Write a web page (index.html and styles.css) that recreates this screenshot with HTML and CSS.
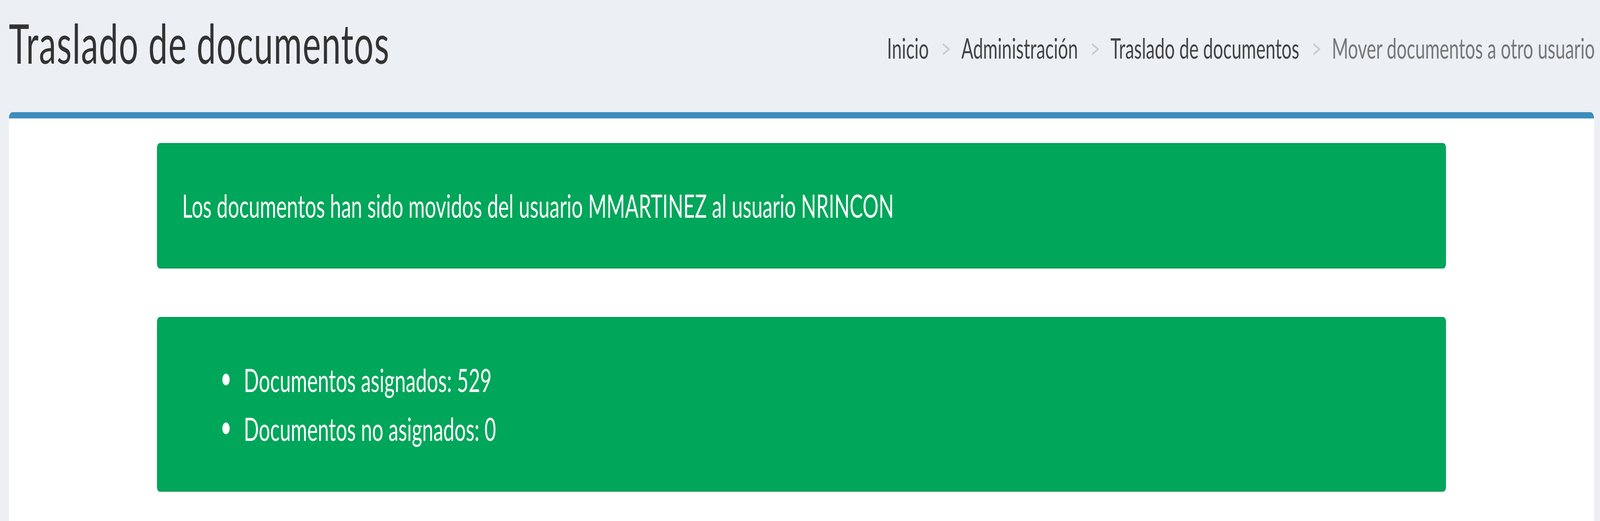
FILE: index.html
```html
<!DOCTYPE html>
<html lang="es">
<head>
    <meta charset="UTF-8">
    <meta name="viewport" content="width=device-width, initial-scale=1.0">
    <title>Traslado de documentos</title>
    <link rel="stylesheet" href="styles.css">
</head>
<body>
    <div class="frame">
        <div class="page">
            <section class="content-header">
                <h1>Traslado de documentos</h1>
                <ol class="breadcrumb">
                    <li><a href="#">Inicio</a></li>
                    <li><a href="#">Administración</a></li>
                    <li><a href="#">Traslado de documentos</a></li>
                    <li class="active">Mover documentos a otro usuario</li>
                </ol>
            </section>

            <section class="content">
                <div class="box">
                    <div class="alert">
                        Los documentos han sido movidos del usuario MMARTINEZ al usuario NRINCON
                    </div>
                    <div class="alert alert-list">
                        <ul>
                            <li>Documentos asignados: 529</li>
                            <li>Documentos no asignados: 0</li>
                        </ul>
                    </div>
                </div>
            </section>
        </div>
    </div>
</body>
</html>
```

FILE: styles.css
```css
body {
    margin: 0;
    padding: 0;
    background-color: #ecf0f5;
    font-family: Lato, "Liberation Sans", sans-serif;
    color: #333;
}

/* La ventana real mide 4096px: se diseña a 6492px y se ajusta en horizontal */
.frame {
    width: 100%;
    overflow: hidden;
}

.page {
    width: 6492px;
    transform: scaleX(0.63093);
    transform-origin: left top;
}

/* Cabecera con título y migas de pan */
.content-header {
    display: flex;
    justify-content: space-between;
    align-items: flex-start;
    height: 287px;
    box-sizing: border-box;
    padding: 39px 21px 0 36px;
}

.content-header h1 {
    margin: 0;
    font-size: 140px;
    line-height: 140px;
    font-weight: 400;
    letter-spacing: 2.5px;
    color: #333;
    white-space: nowrap;
}

.breadcrumb {
    display: flex;
    margin: 48px 0 0;
    padding: 0;
    list-style: none;
    font-size: 72px;
    line-height: 71px;
    white-space: nowrap;
}

.breadcrumb li + li::before {
    content: ">";
    color: #ccc;
    padding: 0 41px 0 49px;
}

.breadcrumb a {
    color: #444;
    text-decoration: none;
}

.breadcrumb .active {
    color: #777;
}

/* Caja blanca con borde azul */
.box {
    margin: 0 24px 0 36px;
    min-height: 1046px;
    box-sizing: border-box;
    background-color: #fff;
    border-top: 16px solid #3c8dbc;
    border-radius: 15px 15px 0 0;
    padding-top: 63px;
}

.alert {
    width: 5230px;
    height: 321px;
    box-sizing: border-box;
    margin: 0 auto;
    padding: 94px 99px 0;
    background-color: #00a65a;
    border: 3px solid #019b54;
    border-radius: 12px;
    color: #fff;
    font-size: 81px;
    line-height: 125px;
}

.alert-list {
    height: 447px;
    margin-top: 124px;
    padding: 95px 0 0;
}

.alert-list ul {
    margin: 0;
    padding: 0 0 0 262px;
    list-style: none;
}

.alert-list li {
    display: flex;
    align-items: flex-start;
}

.alert-list li::before {
    content: "";
    flex: none;
    width: 30px;
    height: 30px;
    margin: 47px 57px 0 0;
    border-radius: 50%;
    background-color: #fff;
}
```
